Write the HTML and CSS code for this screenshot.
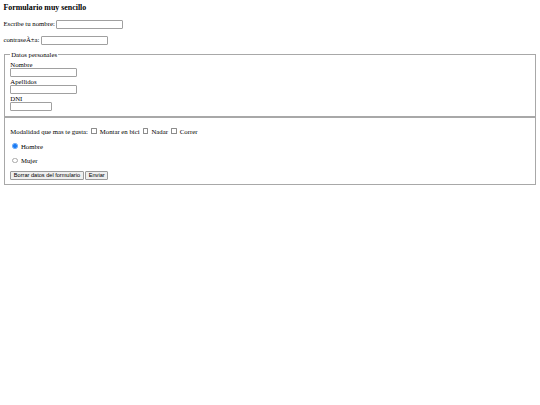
FILE: index.html
```html
<!DOCTYPE html>
<html lang="es">
<head>
<meta charset="utf-8">
<title>Formulario muy sencillo</title>
<link rel="stylesheet" href="styles.css">
</head>
<body class="page">
<h3 class="title">Formulario muy sencillo</h3>
<form class="form" action="#">
  <p class="row">Escribe tu nombre: <input class="field" type="text"></p>
  <p class="row">contraseÃ±a: <input class="field" type="password"></p>
  <fieldset class="group">
    <legend class="legend">Datos personales</legend>
    Nombre<br>
    <input class="field field-stack" type="text"><br>
    Apellidos<br>
    <input class="field field-stack" type="text"><br>
    DNI<br>
    <input class="field field-stack field-short" type="text">
  </fieldset>
  <fieldset class="group">
    <p class="row">Modalidad que mas te gusta: <input class="check" type="checkbox"> Montar en bici <input class="check" type="checkbox"> Nadar <input class="check" type="checkbox"> Correr</p>
    <p class="row"><input class="radio" type="radio" name="sexo" checked> Hombre</p>
    <p class="row"><input class="radio" type="radio" name="sexo"> Mujer</p>
    <input class="btn" type="reset" value="Borrar datos del formulario"> <input class="btn" type="submit" value="Enviar">
  </fieldset>
</form>
</body>
</html>
```

FILE: styles.css
```css
html {
  background: #ffffff;
}

.page {
  margin: 3.4px;
  font-family: "Liberation Serif", "Times New Roman", serif;
  font-size: 6.75px;
  color: #000000;
}

.title {
  font-size: 7.9px;
  font-weight: bold;
  margin: 0 0 7.9px;
}

.form {
  margin: 0;
}

.row {
  margin: 6.75px 0;
}

.field {
  box-sizing: border-box;
  width: 67px;
  height: 8.8px;
  margin: 0;
  padding: 0 1px;
  border: 1px solid #a0a0a0;
  border-radius: 1px;
  background: #ffffff;
  font-family: "Liberation Sans", Arial, sans-serif;
  font-size: 5.6px;
  vertical-align: baseline;
}

.field-stack {
  margin: 0.5px 0 0.7px;
}

.field-short {
  width: 41.5px;
}

.group {
  margin: 0 0.85px;
  padding: 2.4px 5.1px 4.2px;
  border: 1px solid #a8a8a8;
}

.legend {
  padding: 0 0.85px;
}

.check,
.radio {
  -webkit-appearance: none;
  appearance: none;
  box-sizing: border-box;
  display: inline-block;
  width: 5.5px;
  height: 5.5px;
  background: #ffffff;
}

.check {
  margin: 1.3px 1.3px 1.3px 1.7px;
  border: 0.6px solid #8c8c8c;
  border-radius: 0.6px;
  vertical-align: -1.3px;
}

.radio {
  margin: 1.3px 1.3px 0 2.1px;
  border: 0.6px solid #a8a8a8;
  border-radius: 50%;
  vertical-align: 0;
}

.radio:checked {
  border-color: #4a97f7;
  background: radial-gradient(circle, #1a7cf5 0 55%, #8fbdf8 75%, #ffffff 100%);
}

.btn {
  box-sizing: border-box;
  height: 9.3px;
  margin: 0;
  padding: 0 2.5px;
  border: 1px solid #9a9a9a;
  border-radius: 1px;
  background: #efefef;
  color: #000000;
  font-family: "Liberation Sans", Arial, sans-serif;
  font-size: 5.6px;
  line-height: 7px;
}
```
